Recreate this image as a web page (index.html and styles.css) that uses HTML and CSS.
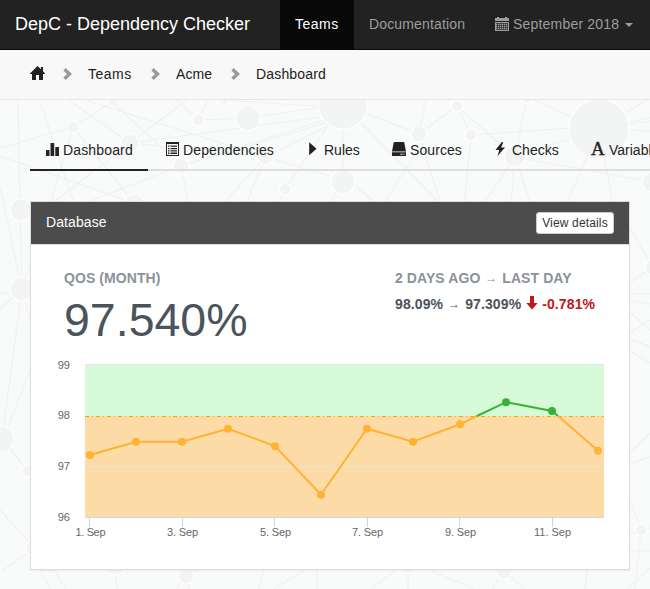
FILE: index.html
```html
<!DOCTYPE html>
<html lang="en">
<head>
<meta charset="utf-8">
<title>DepC - Dependency Checker</title>
<link rel="stylesheet" href="styles.css">
</head>
<body>
<svg class="network" width="650" height="589" viewBox="0 0 650 589" aria-hidden="true">
  <g class="links">
    <path d="M18 99L20 210L22 289L2 439M39 99L73 200M73 127L117 99M73 127L0 148M73 127L50 205M73 127L134 203M67 99L130 143M82 99L265 157M109 99L181 166M130 143L188 99M130 143L265 157M130 143L50 205M0 156L134 203M181 166L85 203M181 166L189 205M176 99L198 120L208 99M198 120L248 118L343 104M224 100L343 108M130 143L343 114L181 166L343 118L265 157M265 157L222 205M265 157L246 205M285 189L343 104M285 189L277 205M265 157L350 182L376 203M343 104V181L330 203M343 104L419 134L457 106L471 135L464 205M343 104L441 205M419 134L426 99M419 134L440 202M457 106L515 157L527 97L599 129L650 98M471 135L599 126M515 157L599 129L650 118M599 129L650 121M599 129L650 131M515 157L652 182M599 129L567 203M599 129L613 205M515 157L484 203M515 157L511 205M515 157L531 205M419 148L383 205"/>
    <path d="M0 187L22 289L0 294M0 309L22 289L35 250M22 289L38 350L7 430M2 439L28 471L40 490M0 510L35 548L3 570M54 570H40L51 589M48 560L66 589M115 563L117 589M186 576L176 589M186 576L189 589M186 576L216 562M264 568L259 589M317 569V589M308 568L274 589M408 561L371 589M408 561V589M408 561L475 589M504 570L492 589M504 570L524 589M587 569L585 589M628 225L653 267L628 284M628 294H650M628 300L650 304M628 310L650 330M628 334L650 320M628 338L650 347M628 350L650 363M628 455L650 433M628 464L650 457M628 495L641 530L635 589M628 535L641 530L650 528M628 551H650M627 589L650 568"/>
  </g>
  <g class="nodes">
    <circle cx="73" cy="127" r="6"/><circle cx="130" cy="143" r="9"/><circle cx="198" cy="120" r="6"/><circle cx="248" cy="118" r="12.5"/><circle cx="224" cy="99" r="6"/><circle cx="265" cy="157" r="8"/><circle cx="181" cy="166" r="8"/><circle cx="285" cy="189" r="6"/><circle cx="134" cy="205" r="11"/><circle cx="21" cy="210" r="11"/><circle cx="343" cy="104" r="25"/><circle cx="419" cy="134" r="8"/><circle cx="457" cy="106" r="6"/><circle cx="471" cy="135" r="6"/><circle cx="527" cy="95" r="8"/><circle cx="515" cy="156" r="11"/><circle cx="599" cy="129" r="30"/><circle cx="343" cy="182" r="12"/><circle cx="652" cy="182" r="10"/><circle cx="22" cy="289" r="12"/><circle cx="1" cy="439" r="13"/><circle cx="28" cy="471" r="6"/><circle cx="35" cy="548" r="9"/><circle cx="653" cy="267" r="8"/><circle cx="115" cy="563" r="12"/><circle cx="186" cy="576" r="8"/><circle cx="408" cy="561" r="12"/><circle cx="504" cy="570" r="9"/><circle cx="641" cy="530" r="6"/>
  </g>
</svg>

<nav class="navbar">
  <a class="brand">DepC - Dependency Checker</a>
  <a class="nav-item nav-teams">Teams</a>
  <a class="nav-item nav-docs">Documentation</a>
  <a class="nav-item nav-month">
    <svg class="icon" viewBox="0 0 14 14"><path d="M0 1h2V0h2v1h6V0h2v1h2v3H0zM0 5h14v9H0z"/><path class="grid" d="M1 6.500h12M1 8.500h12M1 10.500h12M1 12.500h12M2.500 6v7M4.500 6v7M6.500 6v7M8.500 6v7M10.500 6v7M12.500 6v7"/></svg>
    <span>September 2018</span><i class="caret"></i>
  </a>
</nav>

<div class="breadcrumb">
  <svg class="home" viewBox="0 0 15 14"><path d="M7.500 0L11 3.300V1h2v4.200L15 7.500V8H13V14H9V9H6V14H2V8H0V7.500Z"/></svg>
  <svg class="chevron" viewBox="0 0 9 12"><path d="M1.500 1.200L6.500 6L1.500 10.800"/></svg>
  <a class="crumb-teams">Teams</a>
  <svg class="chevron" viewBox="0 0 9 12"><path d="M1.500 1.200L6.500 6L1.500 10.800"/></svg>
  <a class="crumb-acme">Acme</a>
  <svg class="chevron" viewBox="0 0 9 12"><path d="M1.500 1.200L6.500 6L1.500 10.800"/></svg>
  <span class="crumb-page">Dashboard</span>
</div>

<main>
  <div class="tabs">
    <a class="tab tab-dashboard active"><svg class="icon" viewBox="0 0 14 14"><path d="M1 8.500q0-.5.5-.5h2.500q.5 0 .5.500V14H1zM5.500 1.500Q5.500 1 6 1h2.700q.5 0 .5.500V14H5.500zM10.300 5.500q0-.5.5-.5h2.700q.5 0 .5.500V14h-3.700z"/></svg><span>Dashboard</span></a>
    <a class="tab tab-dependencies"><svg class="icon" viewBox="0 0 14 14"><path fill-rule="evenodd" d="M1 0h13v14H1zM2 2v11h11V2zM3 3.500h1.500v1.300H3zM5.500 3.500h6.500v1.300H5.500zM3 6h1.500v1.300H3zM5.500 6h6.500v1.300H5.500zM3 8.300h1.500v1.300H3zM5.500 8.300h6.500v1.300H5.500zM3 10.600h1.500v1.300H3zM5.500 10.600h6.500v1.300H5.500z"/></svg><span>Dependencies</span></a>
    <a class="tab tab-rules"><svg class="icon" viewBox="0 0 14 14"><path d="M3.200 .3L10.500 6.700L3.200 13.200Z"/></svg><span>Rules</span></a>
    <a class="tab tab-sources"><svg class="icon" viewBox="0 0 14 14"><path d="M2.500 0h9q.6 0 .8.600L14 9.500H0L1.700.600Q1.900 0 2.500 0zM0 10.300h14v3.200q0 .5-.5.500H.5Q0 14 0 13.500zM8.500 11.700v1h2v-1zM11.500 11.700v1h1v-1z"/></svg><span>Sources</span></a>
    <a class="tab tab-checks"><svg class="icon" viewBox="0 0 14 14"><path d="M7.800 0L1.500 8H5.300L3.500 14L11 5.500H7L9.300 .5Z"/></svg><span>Checks</span></a>
    <a class="tab tab-variables"><b class="icon letter">A</b><span>Variables</span></a>
  </div>

  <section class="panel">
    <header class="panel-head">
      <span class="panel-title">Database</span>
      <a class="button">View details</a>
    </header>
    <div class="stats">
      <div class="qos">
        <div class="label">QOS (MONTH)</div>
        <div class="value">97.540%</div>
      </div>
      <div class="trend">
        <div class="label">2 DAYS AGO <i class="to">→</i> LAST DAY</div>
        <div class="delta">98.09% <i class="to">→</i> 97.309% <span class="drop"><svg viewBox="0 0 12 14"><path d="M4 0h4v7h3.700L6 13.500L.3 7H4z"/></svg>-0.781%</span></div>
      </div>
    </div>
    <svg class="chart" width="598" height="213" viewBox="31 355 598 213">
      <path fill="#d7fbd8" d="M85 365h519v51H85z"/>
      <path fill="#fcdba7" d="M85 416h519v101H85z"/>
      <path stroke="#e2e4e2" d="M85 364.500H604M85 466.500H604"/>
      <path stroke="#ccd6eb" d="M85 517.500H604M89.500 517v10M182.500 517v10M274.500 517v10M367.500 517v10M459.500 517v10M552.500 517v10"/>
      <path stroke="#ffa500" stroke-dasharray="4 3 1 3" d="M85 416.500H604"/>
      <g class="low"><path d="M90 455L136 441.800H182L228 428.700L275 446L321 494.700L367 428.700L413 441.800L460 424.300L477 416M558 416L598 450.700"/></g>
      <g class="high"><path d="M477 416L506 402.200L552 411L558 416"/></g>
      <g fill="#ffb234"><circle cx="90" cy="455" r="4"/><circle cx="136" cy="441.800" r="4"/><circle cx="182" cy="441.800" r="4"/><circle cx="228" cy="428.700" r="4"/><circle cx="275" cy="446.200" r="4"/><circle cx="321" cy="494.700" r="4"/><circle cx="367" cy="428.700" r="4"/><circle cx="413" cy="441.800" r="4"/><circle cx="460" cy="424.300" r="4"/><circle cx="598" cy="450.700" r="4"/></g>
      <g fill="#35b335"><circle cx="506" cy="402.200" r="4"/><circle cx="552" cy="411" r="4"/></g>
      <g class="axis" text-anchor="end"><text x="70" y="369">99</text><text x="70" y="419">98</text><text x="70" y="470">97</text><text x="70" y="521">96</text></g>
      <g class="axis" text-anchor="middle"><text x="90.500" y="536" textLength="30">1. Sep</text><text x="182.500" y="536" textLength="31">3. Sep</text><text x="275.500" y="536" textLength="31">5. Sep</text><text x="367.500" y="536" textLength="31">7. Sep</text><text x="460.500" y="536" textLength="31">9. Sep</text><text x="552.500" y="536" textLength="37">11. Sep</text></g>
    </svg>
  </section>
</main>
</body>
</html>
```
FILE: styles.css
```css
* { box-sizing: border-box; }
body {
  margin: 0;
  width: 650px;
  height: 589px;
  overflow: hidden;
  background: #f9fbfa;
  font: 14px/20px "Liberation Sans", Arial, sans-serif;
  color: #222;
}
svg { flex: none; }
.network { position: absolute; top: 0; left: 0; z-index: -1; }
.links { fill: none; stroke: #f0f1f1; stroke-width: 1.2; }
.nodes { fill: #f3f4f4; stroke: #fff; stroke-width: 1.2; }

.navbar {
  display: flex;
  height: 50px;
  background: #222;
  border-bottom: 1px solid #080808;
  color: #9d9d9d;
  line-height: 48px;
  white-space: nowrap;
}
.brand { width: 280px; padding-left: 15px; font-size: 18px; color: #fff; }
.nav-item { padding-left: 15px; }
.nav-teams { width: 74px; background: #080808; color: #fff; letter-spacing: .5px; }
.nav-docs { width: 126px; letter-spacing: .15px; }
.nav-month { display: flex; align-items: center; padding-bottom: 2px; letter-spacing: .2px; }
.nav-month span { width: 107px; }
.icon { width: 14px; height: 14px; margin-right: 4px; fill: currentColor; flex: none; }
.grid { stroke: #222; stroke-width: .6; fill: none; }
.caret { margin: 2px 0 0 5px; border: 4px solid transparent; border-top-color: currentColor; border-bottom: 0; }

.breadcrumb {
  display: flex;
  align-items: center;
  height: 50px;
  padding: 0 0 2px 30px;
  background: #f8f8f8;
  border-bottom: 1px solid #e7e7e7;
}
.home { width: 15px; height: 14px; margin: -2px 18px 0 0; fill: #222; }
.chevron { width: 9px; height: 12px; margin-right: 16px; fill: none; stroke: #999; stroke-width: 3.4; }
.crumb-teams { width: 63px; letter-spacing: .5px; }
.crumb-acme { width: 55px; letter-spacing: .1px; }
.crumb-page { letter-spacing: .17px; }

main { padding: 30px 20px 0 30px; }
.tabs {
  display: flex;
  gap: 2px;
  width: 620px;
  height: 41px;
  border-bottom: 2px solid #ddd;
}
.tab {
  display: flex;
  flex: none;
  height: 41px;
  padding: 12px 0 0 15px;
  line-height: 17px;
  white-space: nowrap;
}
.active { border-bottom: 2px solid #222; }
.tab-dashboard { width: 118px; letter-spacing: .15px; }
.tab-dependencies { width: 139px; letter-spacing: .12px; }
.tab-rules { width: 84px; }
.tab-sources { width: 100px; letter-spacing: .08px; }
.tab-checks { width: 95px; }
.letter { font: 19px/14px "Liberation Serif", serif; -webkit-text-stroke: .4px #222; }

.panel {
  width: 600px;
  height: 369px;
  margin-top: 30px;
  background: #fff;
  border: 1px solid #ddd;
  box-shadow: 0 1px 1px rgba(0, 0, 0, .05);
}
.panel-head {
  display: flex;
  justify-content: space-between;
  align-items: center;
  height: 43px;
  padding: 0 15px;
  background: #4c4c4c;
  border-bottom: 1px solid #ddd;
  color: #fff;
}
.panel-title { padding-bottom: 2px; letter-spacing: .1px; }
.button {
  width: 78px;
  height: 22px;
  border: 1px solid #ccc;
  border-radius: 3px;
  background: #fff;
  color: #333;
  font-size: 12px;
  line-height: 20px;
  text-align: center;
  white-space: nowrap;
  letter-spacing: .15px;
}
.stats { display: flex; height: 110px; padding: 23px 0 0 33px; white-space: nowrap; font-weight: bold; }
.qos { width: 331px; }
.label { color: #8b929a; letter-spacing: .08px; }
.value { margin-top: 5px; font-size: 46.5px; line-height: 54px; font-weight: normal; color: #4b535c; }
.delta { margin-top: 6px; color: #4b535c; letter-spacing: .11px; }
.to {
  display: inline-block;
  width: 14px;
  font: 12px/12px "Liberation Sans", sans-serif;
  text-align: center;
  vertical-align: 1px;
}
.drop { margin-left: 1px; color: #c11718; }
.drop svg { width: 12px; height: 14px; margin-right: 4px; vertical-align: -1px; fill: currentColor; }

.chart { display: block; }
.low, .high { fill: none; stroke: #ffb234; stroke-width: 2; }
.high { stroke: #35b335; }
.axis { font: 11px "Liberation Sans", Arial, sans-serif; fill: #666; }
```
